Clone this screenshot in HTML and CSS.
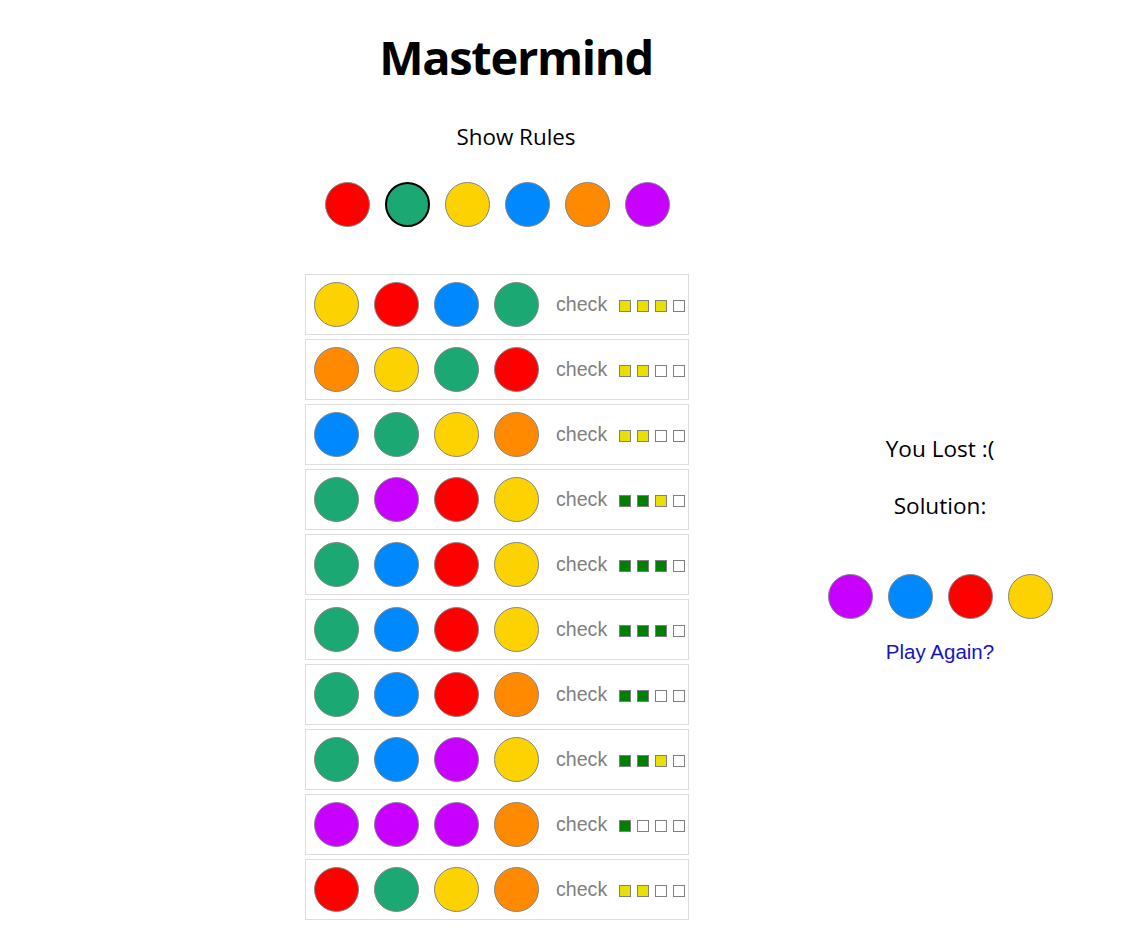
FILE: index.html
```html
<!DOCTYPE html>
<html lang="en">
<head>
<meta charset="utf-8">
<title>Mastermind</title>
<link rel="stylesheet" href="styles.css">
</head>
<body>
<header class="header">
  <h1 class="title">Mastermind</h1>
  <div class="rules">Show Rules</div>
</header>
<main class="game">
  <section class="left">
    <div class="palette">
      <span class="peg red"></span>
      <span class="peg green selected"></span>
      <span class="peg yellow"></span>
      <span class="peg blue"></span>
      <span class="peg orange"></span>
      <span class="peg purple"></span>
    </div>
    <div class="board">
      <div class="row">
        <span class="peg yellow"></span><span class="peg red"></span><span class="peg blue"></span><span class="peg green"></span>
        <span class="check">check</span>
        <span class="hints"><i class="hint y"></i><i class="hint y"></i><i class="hint y"></i><i class="hint"></i></span>
      </div>
      <div class="row">
        <span class="peg orange"></span><span class="peg yellow"></span><span class="peg green"></span><span class="peg red"></span>
        <span class="check">check</span>
        <span class="hints"><i class="hint y"></i><i class="hint y"></i><i class="hint"></i><i class="hint"></i></span>
      </div>
      <div class="row">
        <span class="peg blue"></span><span class="peg green"></span><span class="peg yellow"></span><span class="peg orange"></span>
        <span class="check">check</span>
        <span class="hints"><i class="hint y"></i><i class="hint y"></i><i class="hint"></i><i class="hint"></i></span>
      </div>
      <div class="row">
        <span class="peg green"></span><span class="peg purple"></span><span class="peg red"></span><span class="peg yellow"></span>
        <span class="check">check</span>
        <span class="hints"><i class="hint g"></i><i class="hint g"></i><i class="hint y"></i><i class="hint"></i></span>
      </div>
      <div class="row">
        <span class="peg green"></span><span class="peg blue"></span><span class="peg red"></span><span class="peg yellow"></span>
        <span class="check">check</span>
        <span class="hints"><i class="hint g"></i><i class="hint g"></i><i class="hint g"></i><i class="hint"></i></span>
      </div>
      <div class="row">
        <span class="peg green"></span><span class="peg blue"></span><span class="peg red"></span><span class="peg yellow"></span>
        <span class="check">check</span>
        <span class="hints"><i class="hint g"></i><i class="hint g"></i><i class="hint g"></i><i class="hint"></i></span>
      </div>
      <div class="row">
        <span class="peg green"></span><span class="peg blue"></span><span class="peg red"></span><span class="peg orange"></span>
        <span class="check">check</span>
        <span class="hints"><i class="hint g"></i><i class="hint g"></i><i class="hint"></i><i class="hint"></i></span>
      </div>
      <div class="row">
        <span class="peg green"></span><span class="peg blue"></span><span class="peg purple"></span><span class="peg yellow"></span>
        <span class="check">check</span>
        <span class="hints"><i class="hint g"></i><i class="hint g"></i><i class="hint y"></i><i class="hint"></i></span>
      </div>
      <div class="row">
        <span class="peg purple"></span><span class="peg purple"></span><span class="peg purple"></span><span class="peg orange"></span>
        <span class="check">check</span>
        <span class="hints"><i class="hint g"></i><i class="hint"></i><i class="hint"></i><i class="hint"></i></span>
      </div>
      <div class="row">
        <span class="peg red"></span><span class="peg green"></span><span class="peg yellow"></span><span class="peg orange"></span>
        <span class="check">check</span>
        <span class="hints"><i class="hint y"></i><i class="hint y"></i><i class="hint"></i><i class="hint"></i></span>
      </div>
    </div>
  </section>
  <aside class="result">
    <p class="status">You Lost :(</p>
    <p class="status solution-label">Solution:</p>
    <div class="solution">
      <span class="peg purple"></span><span class="peg blue"></span><span class="peg red"></span><span class="peg yellow"></span>
    </div>
    <a class="again" href="#">Play Again?</a>
  </aside>
</main>
</body>
</html>
```
FILE: styles.css
```css
html, body {
  margin: 0;
  padding: 0;
  background: #fff;
}
body {
  font-family: "Open Sans", "Noto Sans", sans-serif;
  color: #000;
}
.header {
  width: 1032px;
  text-align: center;
}
.title {
  margin: 0;
  padding-top: 28px;
  font-size: 47px;
  line-height: 58px;
  font-weight: 700;
  letter-spacing: -1.3px;
}
.rules {
  margin-top: 36px;
  font-size: 22.4px;
  line-height: 30px;
}
.game {
  display: flex;
  padding-left: 305px;
  gap: 50px;
  margin-top: 30px;
}
.left {
  width: 384px;
  display: flex;
  flex-direction: column;
}
.palette {
  display: flex;
  justify-content: center;
  gap: 15px;
  margin-bottom: 47px;
}
.peg {
  display: block;
  flex: none;
  width: 45px;
  height: 45px;
  box-sizing: border-box;
  border-radius: 50%;
  border: 1px solid #858585;
}
.peg.selected {
  border: 2px solid #000;
}
.red { background: #ff0000; }
.green { background: #1ca873; }
.yellow { background: #fcd200; }
.blue { background: #0088ff; }
.orange { background: #ff8a00; }
.purple { background: #c800ff; }

.board {
  display: flex;
  flex-direction: column;
  gap: 4px;
}
.row {
  display: flex;
  align-items: center;
  gap: 15px;
  width: 384px;
  box-sizing: border-box;
  border: 1px solid #dddddd;
  padding: 7px 8px;
}
.check {
  font-family: "Liberation Sans", Arial, sans-serif;
  font-size: 19.6px;
  color: #808080;
  margin-left: 2px;
  line-height: 23px;
}
.hints {
  display: flex;
  gap: 6px;
  margin-left: -3px;
  margin-top: 3px;
}
.hint {
  display: block;
  width: 12px;
  height: 12px;
  box-sizing: border-box;
  border: 1px solid #808080;
  background: #fff;
}
.hint.y { background: #e9e000; }
.hint.g { background: #008000; }

.result {
  flex: 1;
  align-self: center;
  display: flex;
  flex-direction: column;
  align-items: center;
  padding-bottom: 4px;
}
.status {
  margin: 0;
  font-size: 22.6px;
  line-height: 30px;
}
.solution-label {
  margin-top: 27px;
}
.solution {
  display: flex;
  gap: 15px;
  margin-top: 53px;
}
.again {
  margin-top: 21px;
  font-family: "Liberation Sans", Arial, sans-serif;
  font-size: 20.5px;
  line-height: 24px;
  color: #1414c4;
  text-decoration: none;
}
```
